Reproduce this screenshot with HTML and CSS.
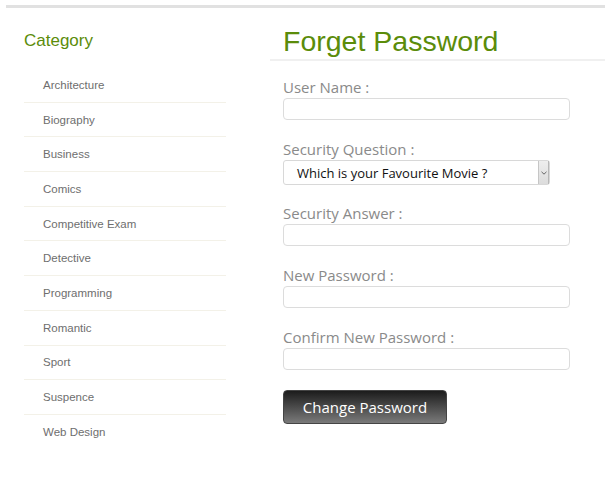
FILE: index.html
```
<!DOCTYPE html>
<html>
<head>
<meta charset="utf-8">
<link rel="stylesheet" href="styles.css">
</head>
<body>
<div class="topbar"></div>
<div class="page">
  <aside class="sidebar">
    <h2 class="cat-title">Category</h2>
    <ul class="cat-list">
      <li>Architecture</li>
      <li>Biography</li>
      <li>Business</li>
      <li>Comics</li>
      <li>Competitive Exam</li>
      <li>Detective</li>
      <li>Programming</li>
      <li>Romantic</li>
      <li>Sport</li>
      <li>Suspence</li>
      <li>Web Design</li>
    </ul>
  </aside>
  <main class="main">
    <h1 class="title">Forget Password</h1>
    <form class="form">
      <div class="group">
        <label class="label">User Name :</label>
        <input class="input" type="text">
      </div>
      <div class="group group-select">
        <label class="label">Security Question :</label>
        <div class="select">
          <span class="select-text">Which is your Favourite Movie ?</span>
          <span class="select-arrow">
            <svg width="6" height="4" viewBox="0 0 6 4"><path d="M0.5 0.8 L3 3.2 L5.5 0.8" fill="none" stroke="#666" stroke-width="1"/></svg>
          </span>
        </div>
      </div>
      <div class="group">
        <label class="label">Security Answer :</label>
        <input class="input" type="text">
      </div>
      <div class="group">
        <label class="label">New Password :</label>
        <input class="input" type="password">
      </div>
      <div class="group">
        <label class="label">Confirm New Password :</label>
        <input class="input" type="password">
      </div>
      <button type="button" class="btn">Change Password</button>
    </form>
  </main>
</div>
</body>
</html>
```
FILE: styles.css
```
* { box-sizing: border-box; }
html, body { margin: 0; padding: 0; background: #fff; }
body { font-family: "Liberation Sans", Arial, sans-serif; }

.topbar {
  height: 3px;
  margin: 5px 7px 0 6px;
  background: #e1e1e1;
}

.page {
  display: flex;
  gap: 44px;
}

.sidebar {
  width: 226px;
  padding-left: 24px;
}

.cat-title {
  margin: 23px 0 0;
  font-size: 17px;
  line-height: 20px;
  font-weight: normal;
  color: #5b8c0a;
}

.cat-list {
  list-style: none;
  margin: 17px 0 0;
  padding: 0;
}

.cat-list li {
  height: 34.7px;
  display: flex;
  align-items: center;
  padding-left: 19px;
  font-size: 11.5px;
  color: #6e6e6e;
  border-bottom: 1px solid #f3f1e8;
}

.cat-list li:last-child { border-bottom: none; }

.main {
  flex: 1;
  margin-right: 7px;
}

.title {
  margin: 17px 0 0;
  padding: 0 0 2px 13px;
  font-size: 28.5px;
  line-height: 32px;
  font-weight: normal;
  color: #5b8c0a;
  border-bottom: 2px solid #f0f0f0;
}

.form {
  display: flex;
  flex-direction: column;
  align-items: flex-start;
  padding: 16px 0 0 13px;
  font-family: "Open Sans", sans-serif;
}

.group {
  display: flex;
  flex-direction: column;
  align-items: flex-start;
  margin-bottom: 19px;
}

.group-select { margin-bottom: 18px; }

.label {
  font-size: 15px;
  line-height: 20px;
  color: #8a8a8a;
  margin-bottom: 1px;
}

.input {
  width: 287px;
  height: 22px;
  border: 1px solid #dcdcdc;
  border-radius: 4px;
  background: #fff;
  margin: 0;
}

.select {
  width: 267px;
  height: 25px;
  border: 1px solid #d8d8d8;
  border-radius: 3px;
  display: flex;
  align-items: center;
  justify-content: space-between;
  padding: 0 0 0 13px;
}

.select-text {
  font-size: 13px;
  color: #111;
}

.select-arrow {
  width: 11px;
  height: 23px;
  background: linear-gradient(#eeeeee, #dcdcdc);
  border-left: 1px solid #c6c6c6;
  border-right: 1px solid #b8b8b8;
  display: flex;
  align-items: center;
  justify-content: center;
}

.btn {
  margin-top: 1px;
  width: 164px;
  height: 34px;
  border: 1px solid #444;
  border-radius: 4px;
  background: linear-gradient(#1c1c1c, #7a7a7a);
  color: #fff;
  font-family: "Open Sans", sans-serif;
  font-size: 15px;
  padding: 0;
}
```
